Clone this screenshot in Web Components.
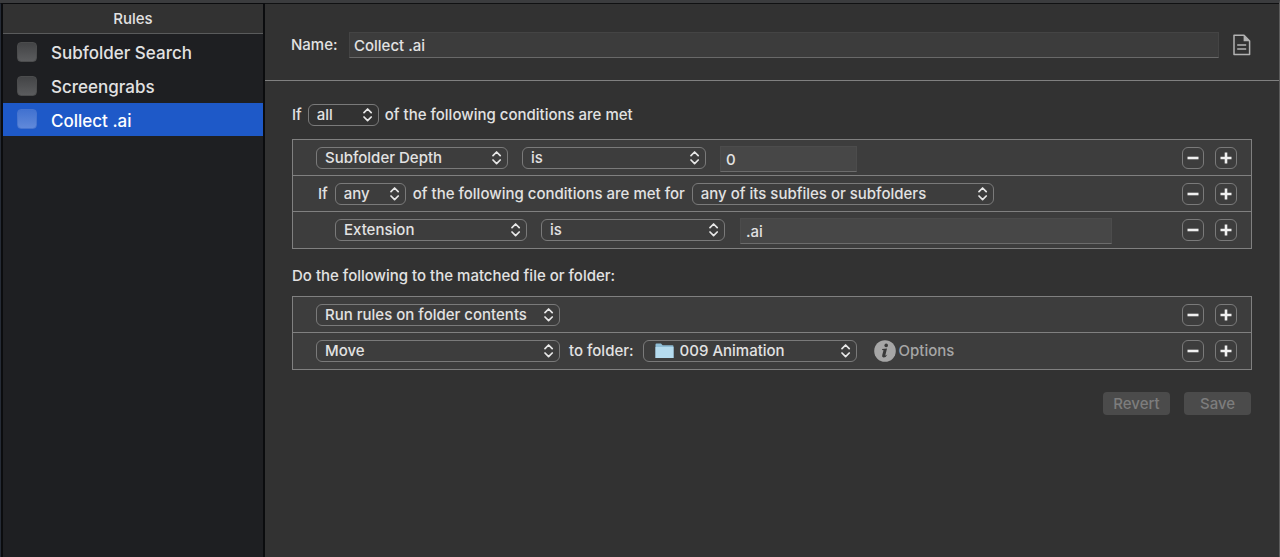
<!DOCTYPE html>
<html lang="en">
<head>
<meta charset="utf-8">
<meta name="viewport" content="width=device-width, initial-scale=1">
<title>Rules</title>
<style>
  :root {
    --window: #323232;
    --panel: #3d3d3d;
    --rule: #808080;
    --control-line: #7a7a7a;
    --text: #e2e2e2;
  }
  html { background: var(--window); }
  body { margin: 0; color: var(--text); font: 500 15px/20px Inter, "Liberation Sans", sans-serif; }
</style>
</head>
<body>
<rules-window>
  <rule-sidebar slot="sidebar" heading="Rules">
    <rule-item>Subfolder Search</rule-item>
    <rule-item>Screengrabs</rule-item>
    <rule-item selected>Collect .ai</rule-item>
  </rule-sidebar>
  <rule-header value="Collect .ai"></rule-header>
  <rule-editor>
    <form-line>
      <span>If</span>
      <pop-up size="tiny" label="Match" value="all" options="any|none"></pop-up>
      <span>of the following conditions are met</span>
    </form-line>
    <rule-list>
      <rule-row>
        <pop-up size="medium" label="Attribute" value="Subfolder Depth" options="Name|Extension|Kind"></pop-up>
        <pop-up size="small" label="Comparison" value="is" options="is not|is greater than|is less than"></pop-up>
        <text-field label="Depth" value="0"></text-field>
      </rule-row>
      <rule-row kind="group">
        <form-line kind="group">
          <span>If</span>
          <pop-up size="tiny" label="Nested match" value="any" options="all|none"></pop-up>
          <span>of the following conditions are met for</span>
          <pop-up size="huge" label="Scope" value="any of its subfiles or subfolders" options="the current file or folder"></pop-up>
        </form-line>
      </rule-row>
      <rule-row kind="nested">
        <pop-up size="medium" label="Nested attribute" value="Extension" options="Name|Kind"></pop-up>
        <pop-up size="small" label="Nested comparison" value="is" options="is not|contains"></pop-up>
        <text-field wide label="Extension value" value=".ai"></text-field>
      </rule-row>
    </rule-list>
    <form-line kind="caption"><span>Do the following to the matched file or folder:</span></form-line>
    <rule-list kind="actions">
      <rule-row>
        <pop-up size="large" label="Action" value="Run rules on folder contents" options="Move|Copy|Rename"></pop-up>
      </rule-row>
      <rule-row kind="action">
        <pop-up size="large" label="Second action" value="Move" options="Copy|Rename"></pop-up>
        <span>to folder:</span>
        <pop-up size="folder" folder label="Destination" value="009 Animation" options="Other…"></pop-up>
        <options-button>Options</options-button>
      </rule-row>
    </rule-list>
    <push-button slot="actions">Revert</push-button>
    <push-button slot="actions">Save</push-button>
  </rule-editor>
</rules-window>

<script>
const define = (name, render) => customElements.define(name, class extends HTMLElement {
  constructor() {
    super();
    this.attachShadow({ mode: "open" });
  }
  connectedCallback() {
    if (this.shadowRoot.childNodes.length) return;
    const template = document.createElement("template");
    template.innerHTML = render(this);
    this.shadowRoot.append(template.content.cloneNode(true));
  }
});

define("rules-window", () => `
  <style>
    :host { display: grid; grid-template-columns: 265px minmax(0, 1fr); min-height: 100vh; box-sizing: border-box;
      border-top: 3px solid #3b3c3e; border-right: 1px solid #5c5c5c; background: var(--window); }
    main { border-top: 1px solid #101112; min-width: 0; }
  </style>
  <slot name="sidebar"></slot>
  <main><slot></slot></main>`);

define("rule-sidebar", host => `
  <style>
    :host { display: block; background: #1e1f22; box-sizing: border-box;
      border: solid #0b0c0e; border-width: 1px 2px 0 1px; border-left-color: #252b36; box-shadow: inset 2px 0 #0b0c0e; padding-left: 2px; }
    h2 { margin: 0; height: 30px; box-sizing: border-box; border-bottom: 1px solid #5a5b5c; background: var(--window);
      font-size: 15px; line-height: 30px; font-weight: 500; text-align: center; }
    nav { display: flex; flex-direction: column; padding-top: 1px; }
  </style>
  <h2>${host.getAttribute("heading")}</h2>
  <nav aria-label="Rules"><slot></slot></nav>`);

define("rule-item", () => `
  <style>
    :host { display: block; font-size: 17px; line-height: 31px; }
    :host([selected]) { background: #1e59c8; color: #fff; line-height: 30px; }
    label { display: flex; align-items: center; gap: 14px; padding: 3px 0 0 14px; }
    input { appearance: none; margin: 0 0 4px; width: 20px; height: 20px; border-radius: 4px; box-sizing: border-box;
      border: 1px solid #4b4c4d; background: linear-gradient(#434446, #5b5c5e); }
    :host([selected]) input { border-color: #4674cf; background: linear-gradient(#4272d0, #6089da); }
  </style>
  <label><input type="checkbox"><slot></slot></label>`);

define("rule-header", host => `
  <style>
    :host { display: flex; align-items: center; padding: 28px 28px 22px 26px; border-bottom: 1px solid var(--rule); }
    label { flex: 0 0 58px; }
    input { flex: 1; min-width: 0; height: 26px; box-sizing: border-box; margin: 0; padding: 0 4px; border: 1px solid #444;
      border-bottom-color: #696969; border-radius: 0; background: #3c3c3c; color: inherit; font: inherit; outline: none; }
    button { display: flex; margin: 0 0 0 14px; padding: 0; border: 0; background: none; color: #b2b2b2; }
  </style>
  <label for="name">Name:</label>
  <input id="name" type="text" value="${host.getAttribute("value")}">
  <button type="button" aria-label="Notes">
    <svg width="18" height="22" viewBox="0 0 18 22" fill="none" stroke="currentColor" stroke-width="1.5">
      <path d="M1 1.2H11L16.6 7V20.6H1Z" stroke-linejoin="round"/>
      <path d="M10.6 1V7.2H17Z" fill="currentColor" stroke="none"/>
      <path d="M4.2 11H13.2M4.2 15H13.2"/>
    </svg>
  </button>`);

define("rule-editor", () => `
  <style>
    :host { display: block; padding: 23px 27px 24px; }
    footer { display: flex; justify-content: flex-end; gap: 14px; margin-top: 22px; padding-right: 1px; }
  </style>
  <slot></slot>
  <footer><slot name="actions"></slot></footer>`);

define("form-line", () => `
  <style>
    :host { display: flex; align-items: center; gap: 6px; white-space: nowrap; }
    :host([kind=group]) { gap: 7px; }
    :host([kind=caption]) { margin-top: 17px; }
  </style>
  <slot></slot>`);

define("rule-list", () => `
  <style>
    :host { display: block; margin-top: 13px; border: 1px solid var(--rule); background: var(--panel); }
    :host([kind=actions]) { margin-top: 10px; }
    ::slotted(rule-row:not(:first-child)) { border-top: 1px solid var(--rule); }
    ::slotted(rule-row:last-child) { padding-bottom: 1px; }
  </style>
  <slot></slot>`);

define("rule-row", () => `
  <style>
    :host { display: flex; align-items: center; min-height: 35px; padding: 0 14px 0 23px; white-space: nowrap; }
    :host([kind=group]) { padding-left: 25px; }
    :host([kind=nested]) { padding-left: 42px; }
    .fields { display: flex; flex: 1; align-items: center; gap: 14px; min-width: 0; }
    :host([kind=action]) .fields { gap: 9px; }
    .buttons { display: flex; gap: 11px; }
    button { display: grid; place-items: center; width: 22px; height: 22px; padding: 0; box-sizing: border-box;
      border: 1px solid var(--control-line); border-radius: 6px; background: none; color: #f0f0f0; }
    svg { display: block; }
  </style>
  <div class="fields"><slot></slot></div>
  <div class="buttons">
    <button type="button" aria-label="Remove"><svg width="12" height="12" stroke="currentColor" stroke-width="2.6"><path d="M0.5 6H11.5"/></svg></button>
    <button type="button" aria-label="Add"><svg width="12" height="12" stroke="currentColor" stroke-width="2.6"><path d="M0.5 6H11.5M6 0.5V11.5"/></svg></button>
  </div>`);

define("pop-up", host => `
  <style>
    :host { display: grid; flex: none; align-items: center; height: 22px; width: 192px; }
    :host([size=tiny]) { width: 71px; }
    :host([size=small]) { width: 184px; }
    :host([size=large]) { width: 244px; }
    :host([size=huge]) { width: 302px; }
    :host([size=folder]) { width: 214px; }
    select, svg { grid-area: 1 / 1; }
    select { appearance: none; width: 100%; height: 22px; box-sizing: border-box; margin: 0; padding: 0 20px 0 8px;
      border: 1px solid var(--control-line); border-radius: 6px; background: transparent; color: inherit;
      font: inherit; line-height: 20px; outline: none; }
    :host([folder]) select { padding-left: 36px; }
    option { background: var(--panel); }
    svg { pointer-events: none; }
    .arrows { justify-self: end; margin-right: 6px; }
    .folder { justify-self: start; margin-left: 12px; }
  </style>
  <select aria-label="${host.getAttribute("label")}">
    ${[host.getAttribute("value"), ...host.getAttribute("options").split("|")].map(text => `<option>${text}</option>`).join("")}
  </select>
  ${host.hasAttribute("folder") ? `<svg class="folder" width="19" height="16" viewBox="0 0 19 16">
    <path d="M0.5 1.5Q0.5 0.5 1.5 0.5H6L7.6 2.2H17.5Q18.5 2.2 18.5 3.2V15H0.5Z" fill="#8fbdd6"/>
    <path d="M0.5 4H18.5V15H0.5Z" fill="#b5dbee"/></svg>` : ""}
  <svg class="arrows" width="10" height="14" viewBox="0 0 10 14" fill="none" stroke="#e8e8e8" stroke-width="1.7" stroke-linecap="round" stroke-linejoin="round">
    <path d="M1 4.6L4.6 1L8.2 4.6M1 9L4.6 12.6L8.2 9"/>
  </svg>`);

define("text-field", host => `
  <style>
    :host { display: block; flex: none; width: 137px; }
    :host([wide]) { width: 372px; margin-left: 1px; }
    input { display: block; width: 100%; height: 26px; box-sizing: border-box; margin: 2px 0 0; padding: 2px 5px 0; border: 1px solid #4c4c4c;
      border-bottom-color: #6c6c6c; border-radius: 0; background: #474747; color: inherit; font: inherit; outline: none; }
  </style>
  <input type="text" aria-label="${host.getAttribute("label")}" value="${host.getAttribute("value")}">`);

define("options-button", () => `
  <style>
    :host { display: block; margin-left: 8px; }
    button { display: flex; align-items: center; gap: 3px; padding: 0; border: 0; background: none; color: #a6a6a6; font: inherit; }
  </style>
  <button type="button">
    <svg width="22" height="22" viewBox="0 0 22 22" aria-hidden="true">
      <circle cx="11" cy="11" r="10.8" fill="#a6a6a6"/>
      <circle cx="12.2" cy="5.4" r="1.8" fill="#3a3a3a"/>
      <path d="M8.2 8.9L13 8.4L11.3 15.4Q11.5 16 13.4 14.4Q12 17.6 9.5 17.5Q7.6 17.2 8.2 15.2L9.5 10.2L8.1 9.9Z" fill="#3a3a3a"/>
    </svg>
    <slot></slot>
  </button>`);

define("push-button", () => `
  <style>
    :host { display: block; }
    button { display: block; width: 67px; height: 23px; padding: 0; border: 0; border-radius: 4px; background: #4b4b4b;
      color: #7d7d7d; font: inherit; line-height: 23px; }
  </style>
  <button type="button" disabled><slot></slot></button>`);
</script>
</body>
</html>
